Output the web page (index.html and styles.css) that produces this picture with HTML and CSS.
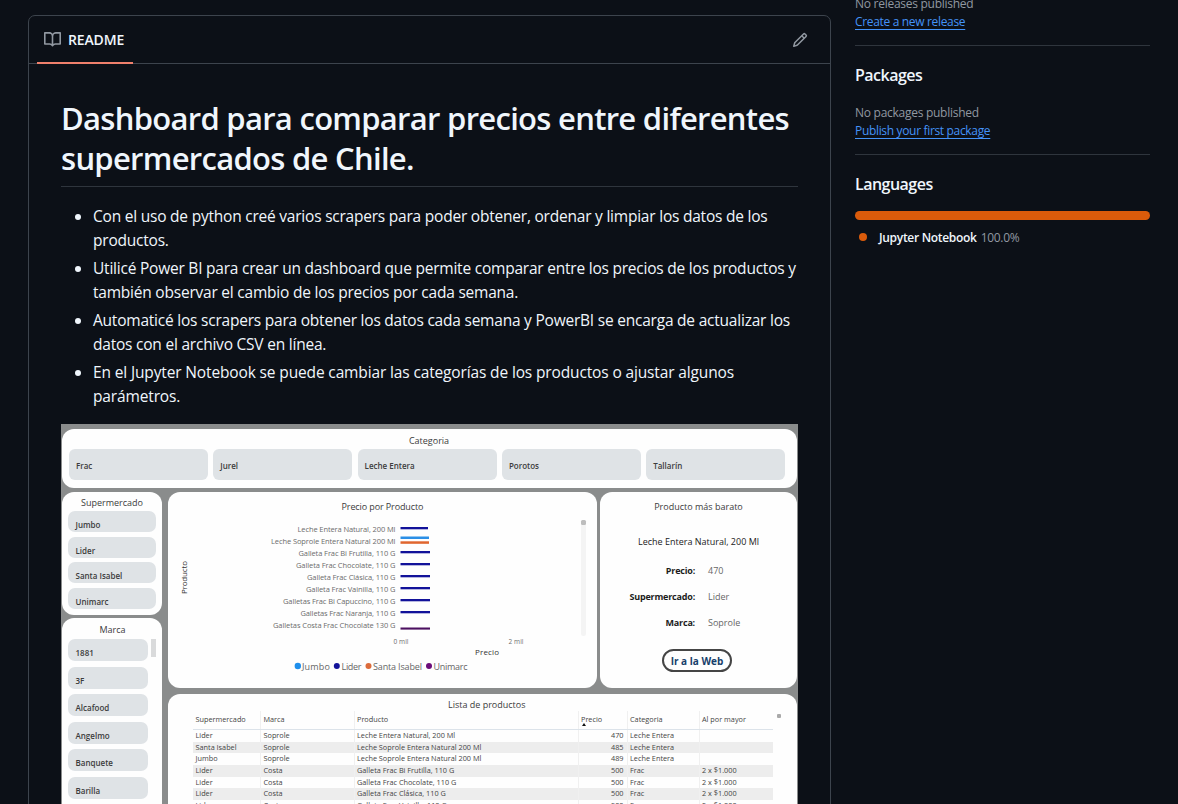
FILE: index.html
```html
<!DOCTYPE html>
<html lang="es">
<head>
<meta charset="utf-8">
<title>README</title>
<link rel="stylesheet" href="styles.css">
</head>
<body>
<div class="page">
  <main class="readme">
    <header class="readme-head">
      <div class="tab">
        <svg class="icon" viewBox="0 0 16 16" width="17" height="17"><path d="M0 1.75A.75.75 0 0 1 .75 1h4.253c1.227 0 2.317.59 3 1.501A3.743 3.743 0 0 1 11.006 1h4.245a.75.75 0 0 1 .75.75v10.5a.75.75 0 0 1-.75.75h-4.507a2.25 2.25 0 0 0-1.591.659l-.622.621a.75.75 0 0 1-1.06 0l-.622-.621A2.25 2.25 0 0 0 5.258 13H.75a.75.75 0 0 1-.75-.75Zm7.251 10.324.004-5.073-.002-2.253A2.25 2.25 0 0 0 5.003 2.5H1.5v9h3.757a3.75 3.75 0 0 1 1.994.574ZM8.755 4.75l-.004 7.322a3.752 3.752 0 0 1 1.992-.572H14.5v-9h-3.495a2.25 2.25 0 0 0-2.25 2.25Z"/></svg>
        <span>README</span>
      </div>
      <svg class="icon" viewBox="0 0 16 16" width="16" height="16"><path d="M11.013 1.427a1.75 1.75 0 0 1 2.474 0l1.086 1.086a1.75 1.75 0 0 1 0 2.474l-8.61 8.61c-.21.21-.47.364-.756.445l-3.251.93a.75.75 0 0 1-.927-.928l.929-3.25c.081-.286.235-.547.445-.758l8.61-8.61Zm.176 4.823L9.75 4.81l-6.286 6.287a.253.253 0 0 0-.064.108l-.558 1.953 1.953-.558a.253.253 0 0 0 .108-.064Zm1.238-3.763a.25.25 0 0 0-.354 0L10.811 3.75l1.439 1.44 1.263-1.263a.25.25 0 0 0 0-.354Z"/></svg>
    </header>
    <article class="content">
      <h1>Dashboard para comparar precios entre diferentes<br>supermercados de Chile.</h1>
      <ul class="points">
        <li>Con el uso de python creé varios scrapers para poder obtener, ordenar y limpiar los datos de los<br>productos.</li>
        <li>Utilicé Power BI para crear un dashboard que permite comparar entre los precios de los productos y<br>también observar el cambio de los precios por cada semana.</li>
        <li>Automaticé los scrapers para obtener los datos cada semana y PowerBI se encarga de actualizar los<br>datos con el archivo CSV en línea.</li>
        <li>En el Jupyter Notebook se puede cambiar las categorías de los productos o ajustar algunos<br>parámetros.</li>
      </ul>
      <div class="dash">
        <section class="panel cats">
          <h2>Categoria</h2>
          <div class="cat-row"><span>Frac</span><span>Jurel</span><span>Leche Entera</span><span>Porotos</span><span>Tallarín</span></div>
        </section>
        <div class="columns">
          <div class="left">
            <section class="panel markets">
              <h2>Supermercado</h2>
              <div class="chips"><span>Jumbo</span><span>Lider</span><span>Santa Isabel</span><span>Unimarc</span></div>
            </section>
            <section class="panel brands">
              <h2>Marca</h2>
              <div class="brand-body">
                <div class="chips"><span>1881</span><span>3F</span><span>Alcafood</span><span>Angelmo</span><span>Banquete</span><span>Barilla</span><span></span></div>
                <i class="thumb"></i>
              </div>
            </section>
          </div>
          <div class="right">
            <div class="top">
              <section class="panel chart">
                <svg viewBox="168 492 429 196" width="429" height="196">
                  <text class="c-title" x="341.500" y="510" textLength="82">Precio por Producto</text>
                  <g class="c-label">
                    <text x="297.500" y="532" textLength="98">Leche Entera Natural, 200 Ml</text>
                    <text x="271" y="544" textLength="124.500">Leche Soprole Entera Natural 200 Ml</text>
                    <text x="298.500" y="556" textLength="97">Galleta Frac Bi Frutilla, 110 G</text>
                    <text x="296" y="568" textLength="99.500">Galleta Frac Chocolate, 110 G</text>
                    <text x="307" y="580" textLength="88.500">Galleta Frac Clásica, 110 G</text>
                    <text x="306" y="592" textLength="89.500">Galleta Frac Vainilla, 110 G</text>
                    <text x="283" y="604" textLength="112.500">Galletas Frac Bi Capuccino, 110 G</text>
                    <text x="300.500" y="615.500" textLength="95">Galletas Frac Naranja, 110 G</text>
                    <text x="273" y="627.500" textLength="122.500">Galletas Costa Frac Chocolate 130 G</text>
                  </g>
                  <g fill="#12129a">
                    <rect x="400.500" y="527" width="27.500" height="2.300"/>
                    <rect x="400.500" y="551" width="29.500" height="2.300"/>
                    <rect x="400.500" y="563" width="29.500" height="2.300"/>
                    <rect x="400.500" y="575" width="29.500" height="2.300"/>
                    <rect x="400.500" y="587" width="29.500" height="2.300"/>
                    <rect x="400.500" y="599" width="29.500" height="2.300"/>
                    <rect x="400.500" y="611" width="29.500" height="2.300"/>
                  </g>
                  <rect x="400.500" y="536.500" width="28.500" height="2.500" fill="#2b8fe6"/>
                  <rect x="400.500" y="541.300" width="28.500" height="2.500" fill="#e0662f"/>
                  <rect x="400.500" y="627.500" width="29.500" height="2.100" fill="#4c1060"/>
                  <g class="c-axis">
                    <text x="393.500" y="644" textLength="15">0 mil</text>
                    <text x="508.500" y="644" textLength="15">2 mil</text>
                  </g>
                  <text class="c-name" x="475" y="654.500" textLength="24">Precio</text>
                  <text class="c-name" transform="translate(187 594) rotate(-90)" textLength="33">Producto</text>
                  <g class="c-legend">
                    <circle cx="297.800" cy="666" r="3.200" fill="#1f8fec"/><text x="302" y="669.500" textLength="28">Jumbo</text>
                    <circle cx="336.800" cy="666" r="3" fill="#12129a"/><text x="341.500" y="669.500" textLength="20">Lider</text>
                    <circle cx="368.500" cy="666" r="3" fill="#dc6c3c"/><text x="373" y="669.500" textLength="49">Santa Isabel</text>
                    <circle cx="429" cy="666" r="3" fill="#6b0d7a"/><text x="433.500" y="669.500" textLength="34">Unimarc</text>
                  </g>
                  <rect x="581" y="520" width="5" height="116" rx="2.500" fill="#f4f4f4"/>
                  <rect x="581" y="520" width="5" height="5" rx="1.500" fill="#bdbdbd"/>
                </svg>
              </section>
              <section class="panel cheap">
                <h2>Producto más barato</h2>
                <p class="name">Leche Entera Natural, 200 Ml</p>
                <dl>
                  <dt>Precio:</dt><dd>470</dd>
                  <dt>Supermercado:</dt><dd>Lider</dd>
                  <dt>Marca:</dt><dd>Soprole</dd>
                </dl>
                <span class="go">Ir a la Web</span>
              </section>
            </div>
            <section class="panel list">
              <h2>Lista de productos</h2>
              <div class="list-body">
                <div class="table">
                  <div class="tr th"><span>Supermercado</span><span>Marca</span><span>Producto</span><span class="sorted">Precio</span><span>Categoria</span><span>Al por mayor</span></div>
                  <div class="tr"><span>Lider</span><span>Soprole</span><span>Leche Entera Natural, 200 Ml</span><span>470</span><span>Leche Entera</span><span></span></div>
                  <div class="tr"><span>Santa Isabel</span><span>Soprole</span><span>Leche Soprole Entera Natural 200 Ml</span><span>485</span><span>Leche Entera</span><span></span></div>
                  <div class="tr"><span>Jumbo</span><span>Soprole</span><span>Leche Soprole Entera Natural 200 Ml</span><span>489</span><span>Leche Entera</span><span></span></div>
                  <div class="tr"><span>Lider</span><span>Costa</span><span>Galleta Frac Bi Frutilla, 110 G</span><span>500</span><span>Frac</span><span>2 x $1.000</span></div>
                  <div class="tr"><span>Lider</span><span>Costa</span><span>Galleta Frac Chocolate, 110 G</span><span>500</span><span>Frac</span><span>2 x $1.000</span></div>
                  <div class="tr"><span>Lider</span><span>Costa</span><span>Galleta Frac Clásica, 110 G</span><span>500</span><span>Frac</span><span>2 x $1.000</span></div>
                  <div class="tr"><span>Lider</span><span>Costa</span><span>Galleta Frac Vainilla, 110 G</span><span>500</span><span>Frac</span><span>2 x $1.000</span></div>
                </div>
                <i class="knob"></i>
              </div>
            </section>
          </div>
        </div>
      </div>
    </article>
  </main>
  <aside class="side">
    <section>
      <p>No releases published</p>
      <a>Create a new release</a>
    </section>
    <section>
      <h3>Packages</h3>
      <p>No packages published</p>
      <a>Publish your first package</a>
    </section>
    <section>
      <h3>Languages</h3>
      <div class="bar"></div>
      <div class="lang"><i></i><b>Jupyter Notebook</b><span>100.0%</span></div>
    </section>
  </aside>
</div>
</body>
</html>
```
FILE: styles.css
```css
* { box-sizing: border-box; margin: 0; padding: 0; }
body { background: #0c1017; color: #f0f6fc; font-family: "Open Sans", "Noto Sans", sans-serif; overflow: hidden; }
.page { display: flex; gap: 24px; height: 804px; padding: 0 28px; overflow: hidden; white-space: nowrap; }
.icon { fill: #9198a1; display: block; }

/* README box */
.readme { width: 803px; height: 830px; margin-top: 15px; border: 1px solid #3d444d; border-radius: 7px; flex: none; }
.readme-head { display: flex; justify-content: space-between; align-items: center; height: 48px; padding: 0 22px 0 8px; border-bottom: 1px solid #3d444d; }
.tab { display: flex; align-items: center; gap: 7px; width: 96px; height: 49px; padding: 2px 0 0 7px; border-bottom: 2px solid #f0806c; font-size: 14px; font-weight: 600; letter-spacing: -0.15px; }
.content { padding: 34px 32px 0; }
h1 { height: 89px; font-size: 31px; line-height: 40px; font-weight: 600; letter-spacing: -0.710px; border-bottom: 1px solid #2f353d; }
.points { display: grid; gap: 4px; margin: 17px 0 16px; padding-left: 32px; font-size: 15.500px; line-height: 24px; letter-spacing: -0.220px; }
.points li:last-child { letter-spacing: -0.140px; }

/* Dashboard */
.dash { width: 737px; height: 400px; padding: 5px 1px; background: #8a8c8c; color: #3c3c3c; }
.panel { background: #fefefe; border-radius: 12px; overflow: hidden; }
.panel h2 { font-size: 9px; font-weight: 400; text-align: center; line-height: 12px; }
.cats { height: 59px; padding: 6px 8px 0 7px; }
.cat-row { display: grid; grid-template-columns: repeat(5, 139px); gap: 5.300px; margin-top: 2px; }
.cat-row span { height: 31px; padding-left: 7px; border-radius: 6px; background: #dfe3e6; font-size: 8px; font-weight: 600; line-height: 33px; }
.columns { display: flex; gap: 6px; margin-top: 4px; }
.left { display: flex; flex-direction: column; gap: 3px; width: 100px; }
.markets { height: 123px; padding: 5px 6px 0; }
.chips { display: grid; font-size: 8px; font-weight: 600; }
.chips span { background: #dfe3e6; border-radius: 7px; padding-left: 7.500px; }
.markets .chips { gap: 4.700px; margin-top: 2px; }
.markets .chips span { height: 21px; line-height: 27px; }
.brands { height: 220px; padding: 6px 5px 0 6px; }
.brand-body { display: flex; gap: 3px; margin-top: 3px; }
.brands .chips { gap: 5.500px; width: 80px; }
.brands .chips span { height: 22px; line-height: 27px; }
.thumb { width: 5px; height: 18px; background: #d9dadb; }
.right { flex: 1; }
.top { display: flex; gap: 3px; }
.chart { width: 429px; height: 196px; }
.chart svg { display: block; }
.c-title { font-size: 9px; fill: #3c3c3c; }
.c-label { font-size: 7.500px; fill: #6c6c6c; }
.c-axis { font-size: 6.500px; fill: #6c6c6c; }
.c-name { font-size: 8px; fill: #333; }
.c-legend { font-size: 9px; fill: #666; }
.cheap { width: 197px; padding-top: 9px; }
.cheap .name { margin-top: 22px; font-size: 9px; line-height: 14px; text-align: center; color: #222; }
.cheap dl { display: grid; grid-template-columns: 95px 1fr; column-gap: 13px; grid-auto-rows: 26px; margin-top: 9px; line-height: 26px; font-size: 9px; }
.cheap dt { text-align: right; font-weight: 700; color: #1c1c1c; letter-spacing: -0.2px; }
.cheap dd { color: #666; }
.go { display: block; width: 70px; height: 23px; margin: 13px 0 0 62px; border: 2px solid #454545; border-radius: 12px; font-size: 10px; line-height: 20px; font-weight: 700; text-align: center; color: #173f6b; }
.list { height: 160px; margin-top: 6px; padding: 5px 16.500px 0 25px; }
.list h2 { padding-right: 0; }
.list-body { display: flex; justify-content: space-between; }
.table { width: 580px; font-size: 7.300px; color: #444; }
.tr { display: grid; grid-template-columns: 67px 93.500px 224px 49px 72px 74.500px; height: 11.700px; line-height: 11.700px; }
.tr span { padding-left: 2.500px; border-left: 1px solid #f0f0f0; }
.tr span:first-child { border-left: 0; }
.tr span:nth-child(4) { text-align: right; padding-right: 3px; }
.tr:nth-child(odd):not(.th) { background: #ededed; }
.tr.th { height: 19px; line-height: 17px; border-bottom: 1px solid #dce3ea; }
.tr.th .sorted { position: relative; text-align: left; }
.sorted::after { content: ""; position: absolute; left: 3px; top: 12px; border: 2.500px solid transparent; border-top: 0; border-bottom: 3px solid #111; }
.knob { width: 4px; height: 4px; margin-top: 3px; border-radius: 1px; background: #aaa; }

/* Sidebar */
.side { width: 295px; margin-top: -5px; font-size: 12px; line-height: 18px; letter-spacing: -0.300px; }
.side section { padding-bottom: 14px; border-bottom: 1px solid #2f353d; }
.side section:last-child { border: 0; }
.side p { color: #9198a1; letter-spacing: -0.270px; }
.side a { display: block; width: max-content; color: #4493f8; letter-spacing: -0.330px; text-decoration: underline; text-underline-offset: 3px; }
.side h3 { margin: 17px 0; font-size: 16px; line-height: 24px; font-weight: 600; letter-spacing: -0.520px; }
.bar { height: 9px; margin-top: -2px; border-radius: 5px; background: #da5b0b; }
.lang { display: flex; align-items: center; margin-top: 9px; }
.lang i { width: 8px; height: 8px; margin: -2px 12px 0 4px; border-radius: 50%; background: #da5b0b; }
.lang b { font-weight: 600; margin-right: 4px; }
.lang span { color: #9198a1; }
```
